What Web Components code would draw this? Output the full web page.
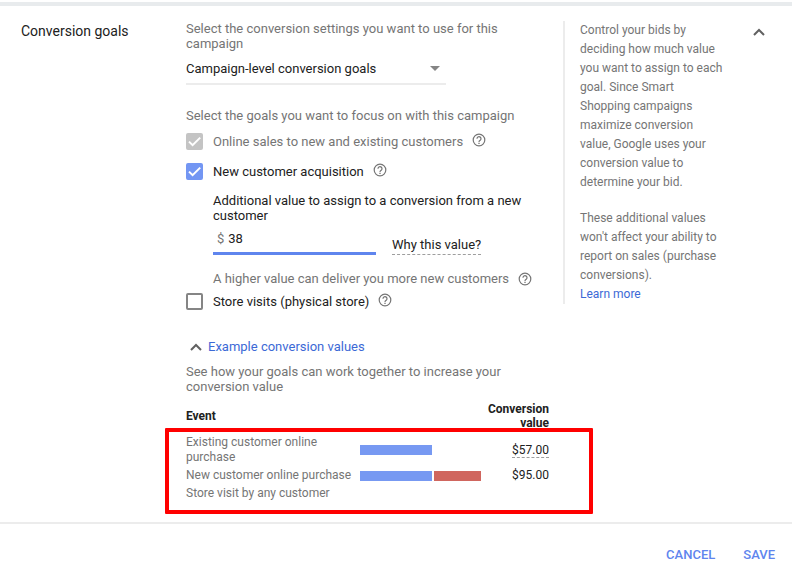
<!DOCTYPE html>
<html lang="en">
<head>
<meta charset="utf-8">
<meta name="viewport" content="width=device-width, initial-scale=1">
<title>Conversion goals</title>
<style>
  body {
    margin: 0;
    background: #fff;
    font-family: Roboto, "Liberation Sans", sans-serif;
    font-size: 13px;
    line-height: 15px;
    color: #212121;
    --muted: #757575;
    --link: #3c69d6;
    --accent: #5f85ee;
    --line: #ececec;
  }
</style>
</head>
<body>
<conversion-goals></conversion-goals>

<script>
/**
 * Creates a template from a string of markup.
 */
function html (markup) {
  const template = document.createElement('template')
  template.innerHTML = markup
  return template
}

const helpTemplate = html(`
<style>
  :host {
    display: inline-flex;
  }

  button {
    display: flex;
    margin: 0;
    padding: 0;
    border: 0;
    background: none;
    color: #757575;
  }
</style>
<button type="button" aria-label="Help">
  <svg width="14" height="14" viewBox="0 0 14 14" fill="none" stroke="currentColor" stroke-width="1.2">
    <circle cx="7" cy="7" r="5.8"/>
    <path d="M5 5.7a2 2 0 1 1 3.3 1.5C7.4 7.8 7 8 7 9"/>
    <path d="M7 9.7v1.2" stroke-width="1.3"/>
  </svg>
</button>
`)

customElements.define('help-button', class extends HTMLElement {
  constructor () {
    super()
    this.attachShadow({ mode: 'open' })
      .appendChild(helpTemplate.content.cloneNode(true))
  }
})

const chevronTemplate = html(`
<style>
  :host {
    display: inline-flex;
    color: #616161;
  }
</style>
<svg width="12" height="8" viewBox="0 0 12 8" fill="none" stroke="currentColor" stroke-width="2">
  <path d="M1 7l5-5 5 5"/>
</svg>
`)

customElements.define('chevron-up', class extends HTMLElement {
  constructor () {
    super()
    this.attachShadow({ mode: 'open' })
      .appendChild(chevronTemplate.content.cloneNode(true))
  }
})

const optionTemplate = html(`
<style>
  :host {
    display: flex;
    align-items: center;
    height: 20px;
  }

  .box {
    display: grid;
    width: 17px;
    height: 17px;
    margin-right: 10px;
  }

  .box > * {
    grid-area: 1 / 1;
  }

  input {
    appearance: none;
    box-sizing: border-box;
    width: 17px;
    height: 17px;
    margin: 0;
    border: 2px solid #858585;
    border-radius: 2px;
    background: #fff;
  }

  input:checked {
    border-color: #7396f3;
    background: #7396f3;
  }

  input:disabled {
    border-color: #c4c4c4;
    background: #c4c4c4;
  }

  svg {
    visibility: hidden;
    pointer-events: none;
  }

  input:checked + svg {
    visibility: visible;
  }

  :host([disabled]) label {
    color: var(--muted);
  }

  help-button {
    margin: 0 0 3px 9px;
  }
</style>
<span class="box">
  <input type="checkbox" id="option">
  <svg width="17" height="17" viewBox="0 0 17 17" fill="none" stroke="#fff" stroke-width="2">
    <path d="M3 8.6l3.6 3.6 7.6-7.6"/>
  </svg>
</span>
<label for="option"><slot></slot></label>
<help-button></help-button>
`)

customElements.define('goal-option', class extends HTMLElement {
  constructor () {
    super()
    this.attachShadow({ mode: 'open' })
      .appendChild(optionTemplate.content.cloneNode(true))
    this.input = this.shadowRoot.querySelector('input')
  }

  connectedCallback () {
    this.input.checked = this.hasAttribute('checked')
    this.input.disabled = this.hasAttribute('disabled')
  }
})

const valueTemplate = html(`
<style>
  :host {
    display: block;
  }

  label {
    display: block;
  }

  .row {
    display: flex;
    align-items: flex-end;
    gap: 16px;
    margin-top: 2px;
  }

  .field {
    display: flex;
    align-items: center;
    box-sizing: border-box;
    width: 163px;
    height: 30px;
    padding-left: 4px;
    border-bottom: 3px solid var(--accent);
    color: var(--muted);
  }

  input {
    flex: 1;
    min-width: 0;
    margin: 0;
    padding: 0 4px;
    border: 0;
    outline: 0;
    background: none;
    font: inherit;
    color: #212121;
  }

  a {
    padding-bottom: 2px;
    border-bottom: 1px dashed #9e9e9e;
    color: inherit;
    text-decoration: none;
  }

  .hint {
    display: flex;
    align-items: center;
    gap: 9px;
    margin-top: 16px;
    color: var(--muted);
  }
</style>
<label for="amount"><slot></slot></label>
<div class="row">
  <div class="field">$<input id="amount" type="text" inputmode="decimal" value="38"></div>
  <a href="#why">Why this value?</a>
</div>
<div class="hint"><slot name="hint"></slot><help-button></help-button></div>
`)

customElements.define('value-field', class extends HTMLElement {
  constructor () {
    super()
    this.attachShadow({ mode: 'open' })
      .appendChild(valueTemplate.content.cloneNode(true))
  }
})

const barTemplate = html(`
<style>
  :host {
    display: flex;
    gap: 2px;
    height: 10px;
  }

  .base {
    flex: 0 0 72px;
    background: #7799f2;
  }

  .extra {
    flex: 0 0 47px;
    background: #d0665e;
  }

  :host(:not([extra])) .extra {
    display: none;
  }
</style>
<span class="base"></span><span class="extra"></span>
`)

customElements.define('value-bar', class extends HTMLElement {
  constructor () {
    super()
    this.attachShadow({ mode: 'open' })
      .appendChild(barTemplate.content.cloneNode(true))
  }
})

const tableTemplate = html(`
<style>
  :host {
    display: block;
    position: relative;
    font-size: 12px;
    line-height: 15px;
  }

  table {
    width: 100%;
    border-collapse: collapse;
    table-layout: fixed;
  }

  th, td {
    padding: 0 0 3px;
    text-align: left;
    font-weight: 400;
  }

  thead th {
    padding-bottom: 5px;
    font-weight: 700;
    line-height: 14px;
  }

  tbody th {
    color: var(--muted);
  }

  .event {
    width: 174px;
  }

  .value {
    width: 66px;
  }

  th:last-child, td:last-child {
    text-align: right;
  }

  a {
    border-bottom: 1px dashed #9e9e9e;
    color: inherit;
    text-decoration: none;
  }

  /* marker drawn over the body rows */
  .frame {
    position: absolute;
    top: 26px;
    right: -44px;
    bottom: -10px;
    left: -21px;
    border: 4px solid #f00;
    border-radius: 1px;
    pointer-events: none;
  }
</style>
<table>
  <colgroup><col class="event"><col><col class="value"></colgroup>
  <thead>
    <tr><th scope="col">Event</th><td></td><th scope="col">Conversion value</th></tr>
  </thead>
  <tbody>
    <tr><th scope="row">Existing customer online<br>purchase</th><td><value-bar></value-bar></td><td><a href="#value">$57.00</a></td></tr>
    <tr><th scope="row">New customer online purchase</th><td><value-bar extra></value-bar></td><td>$95.00</td></tr>
    <tr><th scope="row">Store visit by any customer</th><td></td><td></td></tr>
  </tbody>
</table>
<div class="frame"></div>
`)

customElements.define('example-values', class extends HTMLElement {
  constructor () {
    super()
    this.attachShadow({ mode: 'open' })
      .appendChild(tableTemplate.content.cloneNode(true))
  }
})

const sideTemplate = html(`
<style>
  :host {
    display: block;
    padding: 0 4px 0 15px;
    border-left: 2px solid var(--line);
    color: var(--muted);
    font-size: 12px;
    line-height: 19px;
  }

  ::slotted(p) {
    margin: 0 0 17px;
  }

  ::slotted(p:last-of-type) {
    margin: 0;
  }

  a {
    color: var(--link);
    text-decoration: none;
  }
</style>
<slot></slot>
<a href="#learn">Learn more</a>
`)

customElements.define('side-note', class extends HTMLElement {
  constructor () {
    super()
    this.attachShadow({ mode: 'open' })
      .appendChild(sideTemplate.content.cloneNode(true))
  }
})

const footerTemplate = html(`
<style>
  :host {
    display: flex;
    justify-content: flex-end;
    gap: 28px;
    padding: 21px 17px;
    border-top: 2px solid var(--line);
  }

  button {
    margin: 0;
    padding: 0;
    border: 0;
    background: none;
    font: inherit;
    font-weight: 500;
    line-height: 20px;
    color: var(--accent);
  }
</style>
<button type="button">CANCEL</button>
<button type="button">SAVE</button>
`)

customElements.define('panel-actions', class extends HTMLElement {
  constructor () {
    super()
    this.attachShadow({ mode: 'open' })
      .appendChild(footerTemplate.content.cloneNode(true))
  }
})

const panelTemplate = html(`
<style>
  :host {
    display: block;
    padding-top: 2px;
  }

  .panel {
    display: grid;
    grid-template-columns: 165px minmax(0, 1fr) 166px 39px;
    align-items: start;
    padding: 15px 24px 18px 21px;
    border-top: 4px solid #e8ebed;
  }

  h1 {
    margin: 3px 0 0;
    font-size: 14px;
    font-weight: 400;
    line-height: 15px;
  }

  main {
    padding-right: 14px;
  }

  main p {
    margin: 0;
  }

  .muted {
    color: var(--muted);
  }

  .picker {
    position: relative;
    width: 260px;
    margin: 3px 0 23px;
  }

  select {
    appearance: none;
    box-sizing: border-box;
    width: 100%;
    height: 31px;
    margin: 0;
    padding: 0;
    border: 0;
    border-bottom: 2px solid var(--line);
    border-radius: 0;
    background: none;
    font: inherit;
    color: inherit;
  }

  .picker svg {
    position: absolute;
    top: 12px;
    right: 6px;
    pointer-events: none;
  }

  .options {
    display: grid;
    gap: 10px;
    margin-top: 8px;
  }

  value-field {
    margin: 2px 0 -5px 27px;
  }

  .toggle {
    display: flex;
    align-items: center;
    gap: 6px;
    margin: 28px 0 10px;
    padding: 0 0 0 4px;
    border: 0;
    background: none;
    font: inherit;
    color: var(--link);
  }

  example-values {
    margin-top: 8px;
  }

  .collapse {
    display: flex;
    justify-self: end;
    margin: 7px 3px 0 0;
    padding: 0;
    border: 0;
    background: none;
  }
</style>
<div class="panel">
  <h1>Conversion goals</h1>
  <main>
    <label class="muted" for="level">Select the conversion settings you want to use for this<br>campaign</label>
    <div class="picker">
      <select id="level"><option>Campaign-level conversion goals</option></select>
      <svg width="10" height="6" viewBox="0 0 10 6" fill="#858585"><path d="M0 0h10L5 5z"/></svg>
    </div>
    <p class="muted">Select the goals you want to focus on with this campaign</p>
    <div class="options">
      <goal-option checked disabled>Online sales to new and existing customers</goal-option>
      <goal-option checked>New customer acquisition</goal-option>
      <value-field>
        Additional value to assign to a conversion from a new<br>customer
        <span slot="hint">A higher value can deliver you more new customers</span>
      </value-field>
      <goal-option>Store visits (physical store)</goal-option>
    </div>
    <button class="toggle" type="button" aria-expanded="true"><chevron-up></chevron-up>Example conversion values</button>
    <p class="muted">See how your goals can work together to increase your<br>conversion value</p>
    <example-values></example-values>
  </main>
  <side-note>
    <p>Control your bids by deciding how much value you want to assign to each goal. Since Smart Shopping campaigns maximize conversion value, Google uses your conversion value to determine your bid.</p>
    <p>These additional values won't affect your ability to report on sales (purchase conversions).</p>
  </side-note>
  <button class="collapse" type="button" aria-label="Collapse"><chevron-up></chevron-up></button>
</div>
<panel-actions></panel-actions>
`)

customElements.define('conversion-goals', class extends HTMLElement {
  constructor () {
    super()
    this.attachShadow({ mode: 'open' })
      .appendChild(panelTemplate.content.cloneNode(true))
  }
})
</script>
</body>
</html>
